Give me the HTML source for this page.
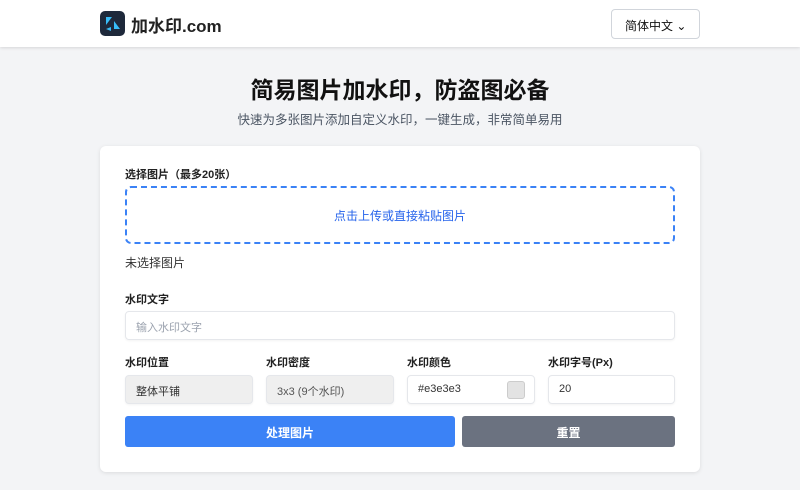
<!DOCTYPE html>
<html><head><meta charset="utf-8"><style>
*{box-sizing:border-box;margin:0;padding:0}
body{width:800px;height:490px;overflow:hidden;background:#f3f4f6;font-family:"Liberation Sans","Noto Sans CJK SC",sans-serif;color:#1f2937;position:relative}
.hdr{position:absolute;left:0;top:0;width:800px;height:47px;background:#fff;box-shadow:0 1px 3px rgba(0,0,0,.12)}
.logo{position:absolute;left:100px;top:11px;width:25px;height:25px;border-radius:5px;background:#1e293b}
.brand{position:absolute;left:131px;top:12px;font-size:17px;font-weight:bold;color:#222}
.lang{position:absolute;left:611px;top:9px;width:89px;height:30px;border:1px solid #d1d5db;border-radius:4px;font-size:12px;padding:7px 0 0 13px;color:#111}
h1{position:absolute;top:71px;width:800px;text-align:center;font-size:23px;font-weight:bold;color:#111}
.sub{position:absolute;top:109px;width:800px;text-align:center;font-size:12.5px;color:#4b5563}
.card{position:absolute;left:100px;top:146px;width:600px;height:326px;background:#fff;border-radius:6px;box-shadow:0 1px 4px rgba(0,0,0,.1)}
.lbl{position:absolute;font-size:11px;font-weight:bold;color:#222}
.drop{position:absolute;left:25px;top:40px;width:550px;height:58px;border:2px dashed #3b82f6;border-radius:6px;text-align:center;font-size:12px;color:#2563eb;padding-top:19px}
.inp{position:absolute;height:29px;border:1px solid #e5e7eb;border-radius:4px;font-size:11px;padding:7px 10px;color:#333;box-shadow:0 1px 2px rgba(0,0,0,.05)}
.btn{position:absolute;top:270px;height:31px;border-radius:3px;color:#fff;font-size:12px;font-weight:bold;text-align:center;padding-top:8px}
</style></head><body>
<div class="hdr"><div class="logo"><svg width="25" height="25"><path d="M6 6l6 0-6 8z M14 10l6 8-6 0z M6 18l5-2 0 4z" fill="#38bdf8"/></svg></div><div class="brand">加水印.com</div><div class="lang">简体中文 ⌄</div></div>
<h1>简易图片加水印，防盗图必备</h1>
<div class="sub">快速为多张图片添加自定义水印，一键生成，非常简单易用</div>
<div class="card">
<div class="lbl" style="left:25px;top:20px">选择图片（最多20张）</div>
<div class="drop">点击上传或直接粘贴图片</div>
<div style="position:absolute;left:25px;top:108px;font-size:12px;color:#333">未选择图片</div>
<div class="lbl" style="left:25px;top:145px">水印文字</div>
<div class="inp" style="left:25px;top:165px;width:550px;color:#9ca3af">输入水印文字</div>
<div class="lbl" style="left:25px;top:208px">水印位置</div>
<div class="lbl" style="left:166px;top:208px">水印密度</div>
<div class="lbl" style="left:307px;top:208px">水印颜色</div>
<div class="lbl" style="left:448px;top:208px">水印字号(Px)</div>
<div class="inp" style="left:25px;top:229px;width:128px;background:#efefef">整体平铺</div>
<div class="inp" style="left:166px;top:229px;width:128px;background:#efefef;color:#555">3x3 (9个水印)</div>
<div class="inp" style="left:307px;top:229px;width:128px">#e3e3e3<span style="position:absolute;right:9px;top:5px;width:18px;height:18px;background:#e3e3e3;border:1px solid #ccc;border-radius:3px"></span></div>
<div class="inp" style="left:448px;top:229px;width:127px">20</div>
<div class="btn" style="left:25px;width:330px;background:#3b82f6">处理图片</div>
<div class="btn" style="left:362px;width:213px;background:#6b7280">重置</div>
</div>
</body></html>
